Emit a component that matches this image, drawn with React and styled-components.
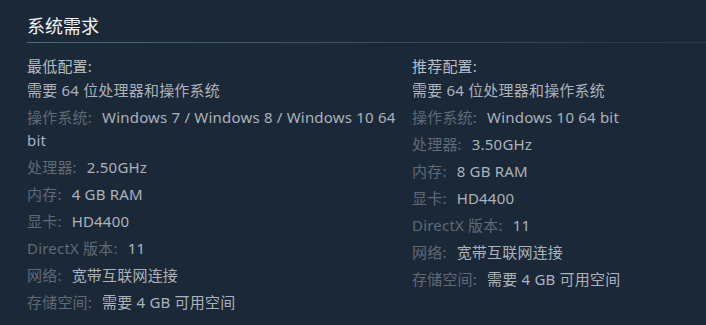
import React from 'react';
import styled, { createGlobalStyle } from 'styled-components';

const GlobalStyle = createGlobalStyle`
  html, body {
    margin: 0;
    padding: 0;
    background: #1b2838;
  }
  body {
    font-family: "Noto Sans", "Noto Sans CJK SC", sans-serif;
  }
`;

const Wrapper = styled.div`
  width: 706px;
  height: 325px;
  overflow: hidden;
  background: #1b2838;
  padding-top: 15px;
  box-sizing: border-box;
`;

const BlockTitle = styled.h2`
  margin: 0 0 12px 27px;
  font-size: 18px;
  font-weight: normal;
  line-height: 22px;
  color: #f2f4f6;
  background-image: linear-gradient(to right, #4a6b81 0%, #3a5468 40%, #26384b 100%);
  background-repeat: no-repeat;
  background-position: left bottom;
  background-size: 100% 1px;
  padding-bottom: 6px;
`;

const Columns = styled.div`
  display: grid;
  grid-template-columns: 375px 1fr;
  column-gap: 10px;
  padding-left: 27px;
`;

const Column = styled.div`
  font-size: 15px;
  letter-spacing: 0.2px;
  color: #acb2b8;
`;

const ColumnTitle = styled.div`
  line-height: 22px;
  margin-bottom: 2px;
  color: #b8bec4;
`;

const ReqList = styled.ul`
  list-style: none;
  margin: 0;
  padding: 0;
`;

const ReqItem = styled.li`
  line-height: 23px;
  margin-bottom: 4px;
  word-wrap: break-word;
`;

const Label = styled.span`
  color: #5f6a74;
  margin-right: 10px;
`;

const minimum = [
  ['操作系统:', 'Windows 7 / Windows 8 / Windows 10 64 bit'],
  ['处理器:', '2.50GHz'],
  ['内存:', '4 GB RAM'],
  ['显卡:', 'HD4400'],
  ['DirectX 版本:', '11'],
  ['网络:', '宽带互联网连接'],
  ['存储空间:', '需要 4 GB 可用空间'],
];

const recommended = [
  ['操作系统:', 'Windows 10 64 bit'],
  ['处理器:', '3.50GHz'],
  ['内存:', '8 GB RAM'],
  ['显卡:', 'HD4400'],
  ['DirectX 版本:', '11'],
  ['网络:', '宽带互联网连接'],
  ['存储空间:', '需要 4 GB 可用空间'],
];

const ReqColumn = ({ title, items }) => (
  <Column>
    <ColumnTitle>{title}</ColumnTitle>
    <ReqList>
      <ReqItem>需要 64 位处理器和操作系统</ReqItem>
      {items.map(([label, value]) => (
        <ReqItem key={label}>
          <Label>{label}</Label>
          {value}
        </ReqItem>
      ))}
    </ReqList>
  </Column>
);

export default function App() {
  return (
    <Wrapper>
      <GlobalStyle />
      <BlockTitle>系统需求</BlockTitle>
      <Columns>
        <ReqColumn title="最低配置:" items={minimum} />
        <ReqColumn title="推荐配置:" items={recommended} />
      </Columns>
    </Wrapper>
  );
}
